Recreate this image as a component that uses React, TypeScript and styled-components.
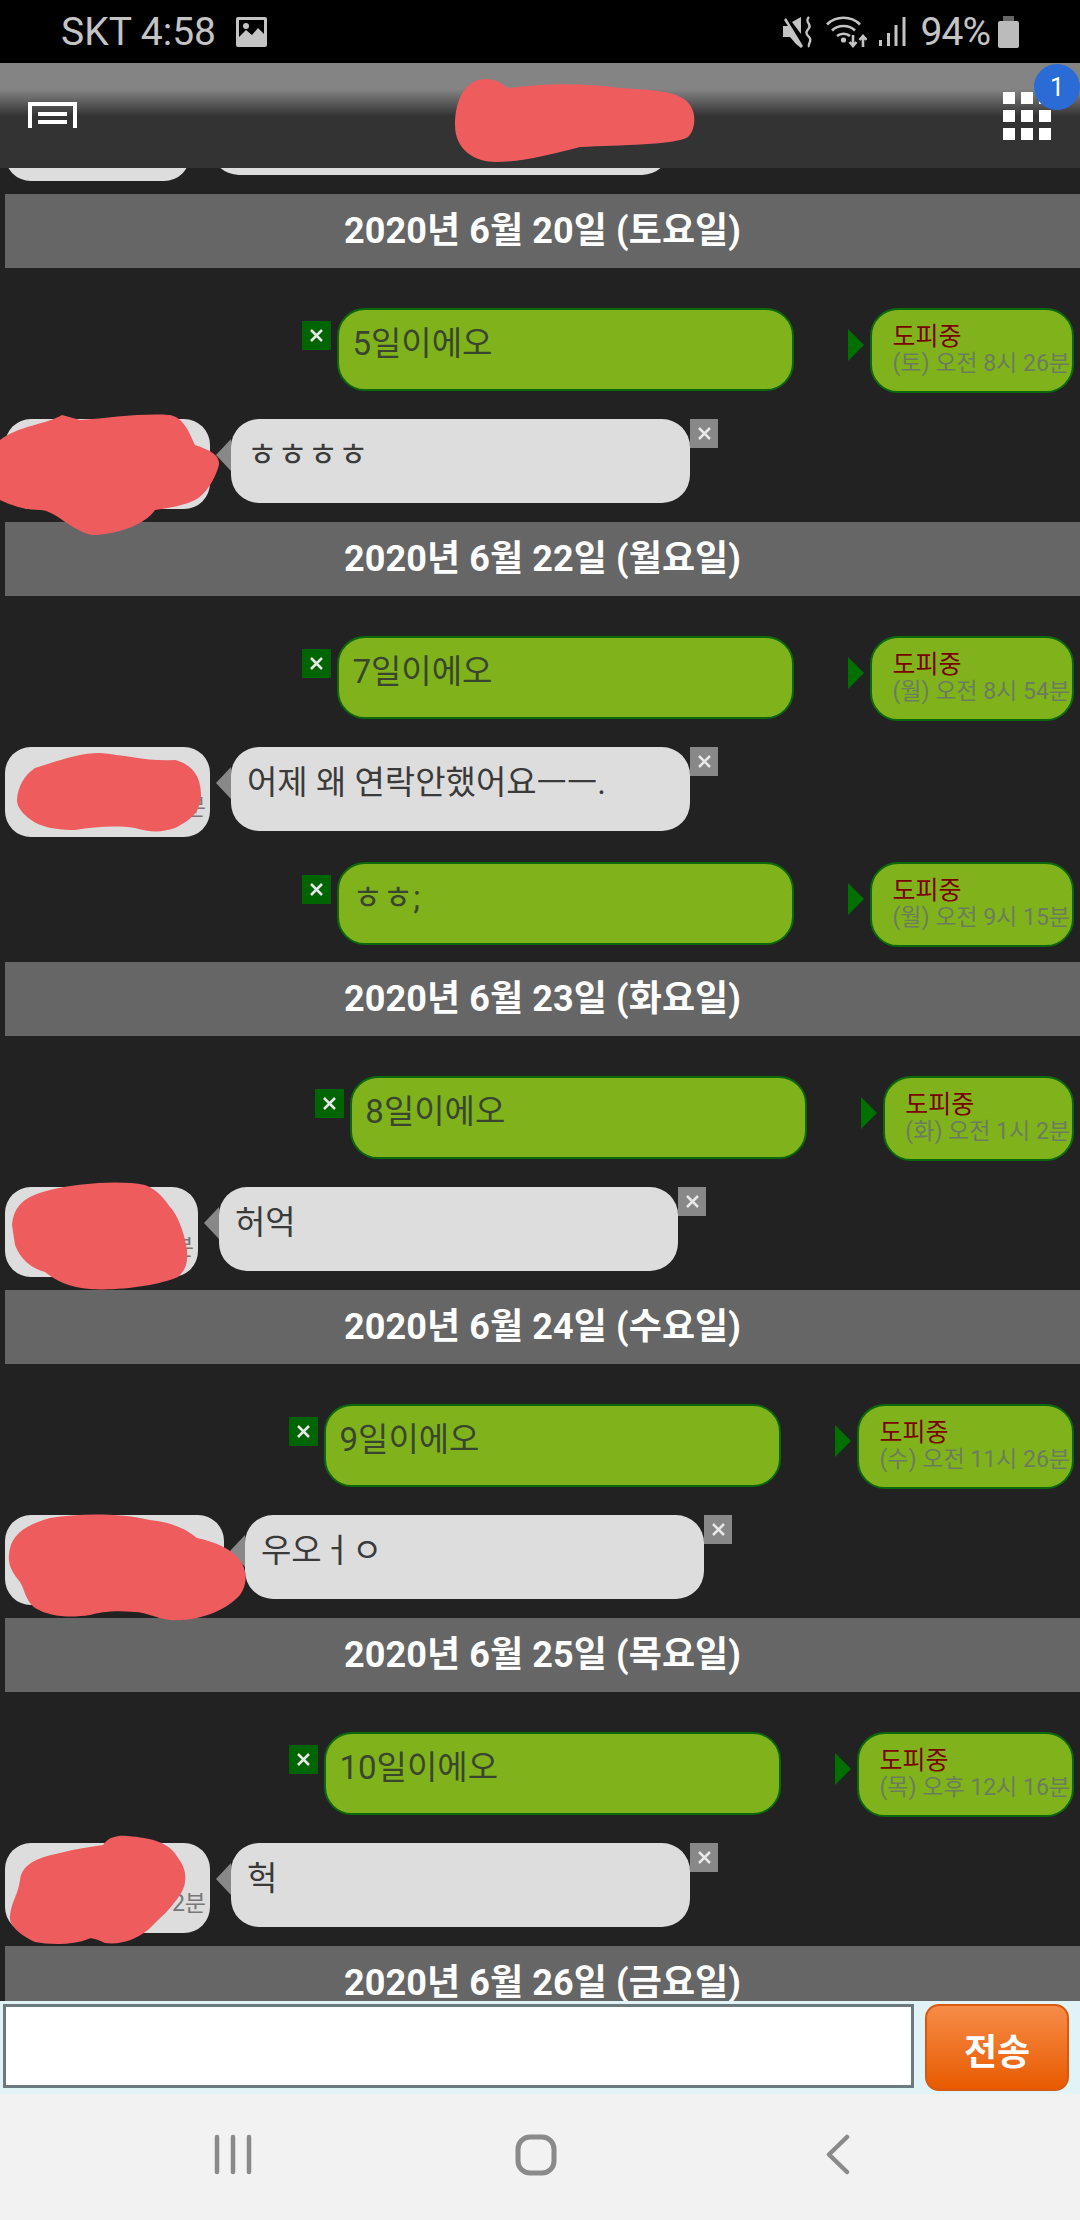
import React from "react";
import styled, { createGlobalStyle } from "styled-components";

const GlobalStyle = createGlobalStyle`
  html, body {
    margin: 0;
    padding: 0;
    background: #222;
    font-family: Roboto, "Noto Sans CJK KR", sans-serif;
  }
`;

const Page = styled.div`
  position: relative;
  width: 1080px;
  height: 2220px;
  display: flex;
  flex-direction: column;
  overflow: hidden;
`;

const StatusBar = styled.div`
  height: 63px;
  flex: none;
  background: #000;
  color: #c4c4c4;
  display: flex;
  align-items: center;
  padding: 0 61px 0 61px;
  box-sizing: border-box;
  font-size: 39px;
`;

const StatusLeft = styled.div`
  display: flex;
  align-items: center;
  gap: 20px;
  flex: 1;
`;

const StatusRight = styled.div`
  display: flex;
  align-items: center;
`;

const Percent = styled.span`
  letter-spacing: -1px;
`;

const Header = styled.div`
  height: 105px;
  flex: none;
  background: linear-gradient(to bottom, #848484 0, #848484 26px, #333 53px, #333 100%);
  display: flex;
  justify-content: space-between;
  align-items: flex-start;
  padding: 39px 29px 0 28px;
  box-sizing: border-box;
`;

const AppsButton = styled.div`
  position: relative;
  margin-top: -10px;
  display: grid;
  grid-template-columns: repeat(3, 12px);
  grid-auto-rows: 12px;
  gap: 6px;
`;

const AppsDot = styled.span`
  background: #fff;
`;

const Badge = styled.span`
  position: absolute;
  left: 31px;
  top: -28px;
  width: 46px;
  height: 46px;
  border-radius: 50%;
  background: #2b6bd6;
  color: #fff;
  font-size: 25px;
  display: flex;
  align-items: center;
  justify-content: center;
`;

const ChatList = styled.div`
  flex: 1;
  min-height: 0;
  overflow: hidden;
  background: #222;
`;

const Scroller = styled.div`
  display: flex;
  flex-direction: column;
  margin-top: -88px;
`;

const DateBar = styled.div`
  flex: none;
  height: 74px;
  margin: 0 0 28px 5px;
  background: #666;
  color: #fff;
  font-size: 36px;
  font-weight: 700;
  line-height: 74px;
  text-align: center;
  letter-spacing: 0.1px;
`;

const SentRow = styled.div`
  flex: none;
  display: flex;
  justify-content: flex-end;
  align-items: flex-start;
  margin: 12px 6px 15px 0;
`;

const ReceivedRow = styled.div`
  flex: none;
  display: flex;
  align-items: flex-start;
  margin: 11px 0 13px 5px;
`;

const CloseBox = styled.div<{ $sent?: boolean }>`
  flex: none;
  width: ${(p) => (p.$sent ? 29 : 28)}px;
  height: 29px;
  margin-top: ${(p) => (p.$sent ? 13 : 0)}px;
  margin-right: ${(p) => (p.$sent ? 6 : 0)}px;
  background: ${(p) => (p.$sent ? "#006400" : "#888")};
  color: #e8e8e8;
  display: flex;
  align-items: center;
  justify-content: center;
`;

const Bubble = styled.div<{ $sent?: boolean }>`
  flex: none;
  box-sizing: border-box;
  width: ${(p) => (p.$sent ? 457 : 459)}px;
  height: ${(p) => (p.$sent ? 83 : 84)}px;
  border-radius: 28px;
  padding: ${(p) => (p.$sent ? "15px 13px" : "17px 16px")};
  background: ${(p) => (p.$sent ? "#80b31b" : "#ddd")};
  border: ${(p) => (p.$sent ? "2.5px solid #0b680b" : "none")};
  color: ${(p) => (p.$sent ? "#3a4530" : "#3a3a3a")};
  font-size: 33px;
  line-height: 38px;
  white-space: nowrap;
`;

const SentArrow = styled.div`
  flex: none;
  width: 0;
  height: 0;
  margin: 21px 6px 0 54px;
  border-left: 16px solid #007000;
  border-top: 16px solid transparent;
  border-bottom: 16px solid transparent;
`;

const ReceivedArrow = styled.div`
  flex: none;
  width: 0;
  height: 0;
  margin: 20px 0 0 6px;
  border-right: 15px solid #888;
  border-top: 16px solid transparent;
  border-bottom: 16px solid transparent;
`;

const StatusBubble = styled.div`
  flex: none;
  box-sizing: border-box;
  height: 85px;
  border-radius: 28px;
  border: 2.5px solid #0b680b;
  background: #80b31b;
  padding: 14px 2px 0 20px;
  white-space: nowrap;
`;

const StatusLabel = styled.div`
  color: #7a0000;
  font-size: 25px;
  line-height: 26px;
`;

const StatusTime = styled.div`
  color: #6c7c5e;
  font-size: 23px;
  line-height: 27px;
`;

const Avatar = styled.div<{ $width: number }>`
  flex: none;
  box-sizing: border-box;
  width: ${(p) => p.$width}px;
  height: 90px;
  border-radius: 26px;
  background: #ddd;
  color: #777;
  font-size: 23px;
  line-height: 26px;
  padding: 0 4px 16px 0;
  display: flex;
  align-items: flex-end;
  justify-content: flex-end;
`;

const InputBar = styled.div`
  flex: none;
  height: 93px;
  box-sizing: border-box;
  background: #e2f3f7;
  display: flex;
  align-items: flex-start;
  padding: 3px 0 0 3px;
`;

const MessageInput = styled.input`
  flex: none;
  box-sizing: border-box;
  width: 911px;
  height: 84px;
  border: 3px solid #6c7a80;
  background: #fff;
  outline: none;
  padding: 0 8px;
`;

const SendButton = styled.button`
  flex: none;
  box-sizing: border-box;
  width: 144px;
  height: 87px;
  margin-left: 11px;
  border: 2px solid #d9590f;
  border-radius: 14px;
  background: linear-gradient(to bottom, #f68c48, #e85a00);
  color: #fff;
  font-family: inherit;
  font-size: 36px;
  font-weight: 700;
  padding: 2px 0 0;
`;

const NavBar = styled.div`
  flex: none;
  height: 126px;
  background: #f2f2f2;
  display: grid;
  grid-template-columns: repeat(3, 1fr);
  padding: 40px 0 0;
  box-sizing: border-box;
  color: #8a8a8a;
`;

const NavSlot = styled.div<{ $shift: number }>`
  display: flex;
  justify-content: center;
  transform: translateX(${(p) => p.$shift}px);
`;

const Scribbles = styled.svg`
  position: absolute;
  left: 0;
  top: 0;
  pointer-events: none;
`;

const ImageIcon = () => (
  <svg width="31" height="30" viewBox="0 0 31 30">
    <path
      fill="#c4c4c4"
      fillRule="evenodd"
      d="M2 0h27a2 2 0 0 1 2 2v26a2 2 0 0 1-2 2H2a2 2 0 0 1-2-2V2a2 2 0 0 1 2-2zM3 3v17l7-7 6 5 6-7 6 6V3zM10 6a3 3 0 1 0 0 6 3 3 0 0 0 0-6z"
    />
  </svg>
);

const MuteIcon = () => (
  <svg width="30" height="32" viewBox="0 0 30 32" style={{ marginRight: 13 }}>
    <path fill="#c4c4c4" d="M0 10h5L1 4l2-2 17 28-2 2-5-4-6-7H0zM9 6l9-5v17z" />
    <path d="M26 1c-5 5 3 7 0 11s-4 5 0 9-2 7 0 10" fill="none" stroke="#c4c4c4" strokeWidth="2.4" />
  </svg>
);

const WifiIcon = () => (
  <svg width="41" height="33" viewBox="0 0 41 33" style={{ marginRight: 12 }}>
    <g fill="none" stroke="#c4c4c4" strokeWidth="2.6">
      <path d="M1 9.500C10 .5 25 .5 34 9.500" />
      <path d="M6 15.500C12 9.500 23 9.500 29 15.500" />
      <path d="M11 21C14.500 18 20.500 18 24 21" />
      <path d="M27 20v11M23.500 27l3.500 4 3.500-4" />
      <path d="M37 32V21M33.500 25l3.500-4 3.500 4" />
    </g>
    <circle cx="17.500" cy="25" r="2.600" fill="#c4c4c4" />
  </svg>
);

const SignalIcon = () => (
  <svg width="27" height="29" viewBox="0 0 27 29" style={{ marginRight: 15 }}>
    <g fill="#c4c4c4">
      <rect x="0" y="23" width="3" height="6" />
      <rect x="8" y="16" width="3" height="13" />
      <rect x="15.500" y="8" width="3" height="21" />
      <rect x="23.500" y="0" width="3" height="29" />
    </g>
  </svg>
);

const BatteryIcon = () => (
  <svg width="21" height="32" viewBox="0 0 21 32" style={{ marginLeft: 8 }}>
    <rect x="5" y="0" width="11" height="5" fill="#666" />
    <rect x="0" y="5" width="21" height="27" rx="2" fill="#bbb" />
  </svg>
);

const MenuIcon = () => (
  <svg width="49" height="26" viewBox="0 0 49 26">
    <path d="M2 26V2h45v24" fill="none" stroke="#fff" strokeWidth="4" />
    <rect x="10" y="10" width="29" height="4" fill="#fff" />
    <rect x="10" y="18" width="29" height="4" fill="#fff" />
  </svg>
);

const RecentIcon = () => (
  <svg width="38" height="41" viewBox="0 0 38 41">
    <g fill="none" stroke="currentColor" strokeWidth="4.500" strokeLinecap="round">
      <path d="M3 3v35M19 3v35M35 3v35" />
    </g>
  </svg>
);

const HomeIcon = () => (
  <svg width="42" height="42" viewBox="0 0 42 42">
    <rect x="3" y="3" width="36" height="36" rx="12" fill="none" stroke="currentColor" strokeWidth="5" />
  </svg>
);

const BackIcon = () => (
  <svg width="24" height="41" viewBox="0 0 24 41">
    <path d="M21 3L3 20.500 21 38" fill="none" stroke="currentColor" strokeWidth="4.500" strokeLinecap="round" strokeLinejoin="round" />
  </svg>
);

const CrossIcon = () => (
  <svg width="15" height="15" viewBox="0 0 15 15">
    <path d="M2 2l11 11M13 2L2 13" stroke="currentColor" strokeWidth="2.500" fill="none" />
  </svg>
);

type Item =
  | { kind: "date"; text: string }
  | { kind: "sent"; text: string; time: string }
  | { kind: "received"; text: string; avatar: number; time?: string };

const items: Item[] = [
  { kind: "received", text: "", avatar: 185 },
  { kind: "date", text: "2020년 6월 20일 (토요일)" },
  { kind: "sent", text: "5일이에오", time: "(토) 오전 8시 26분" },
  { kind: "received", text: "ㅎㅎㅎㅎ", avatar: 205, time: "분" },
  { kind: "date", text: "2020년 6월 22일 (월요일)" },
  { kind: "sent", text: "7일이에오", time: "(월) 오전 8시 54분" },
  { kind: "received", text: "어제 왜 연락안했어요ㅡㅡ.", avatar: 205, time: "분" },
  { kind: "sent", text: "ㅎㅎ;", time: "(월) 오전 9시 15분" },
  { kind: "date", text: "2020년 6월 23일 (화요일)" },
  { kind: "sent", text: "8일이에오", time: "(화) 오전 1시 2분" },
  { kind: "received", text: "허억", avatar: 193, time: "분" },
  { kind: "date", text: "2020년 6월 24일 (수요일)" },
  { kind: "sent", text: "9일이에오", time: "(수) 오전 11시 26분" },
  { kind: "received", text: "우오ㅓㅇ", avatar: 219 },
  { kind: "date", text: "2020년 6월 25일 (목요일)" },
  { kind: "sent", text: "10일이에오", time: "(목) 오후 12시 16분" },
  { kind: "received", text: "헉", avatar: 205, time: "2분" },
  { kind: "date", text: "2020년 6월 26일 (금요일)" },
];

const scribbles = [
  "M455 125C455 100 465 79 486 79C500 79 505 88 510 88C540 84 580 82 620 88C650 90 680 90 690 105C697 115 695 130 688 137C675 145 620 145 580 147C550 155 520 162 496 162C475 162 455 150 455 125Z",
  "M0 440C20 425 45 425 62 415L80 420C110 418 140 413 170 415C185 418 190 435 195 445C210 450 220 455 219 465C215 480 205 495 195 500C185 505 170 508 155 510C145 525 115 535 92 535C70 530 55 510 40 510C25 510 10 505 0 500Z",
  "M17 800C18 785 25 775 35 768C60 760 80 753 100 753C125 755 150 762 175 760C195 765 201 780 201 795C200 810 195 818 175 828C160 833 150 832 135 828C115 825 95 827 75 830C50 830 35 825 25 815C20 810 17 805 17 800Z",
  "M12 1225C14 1205 25 1196 50 1190C80 1183 120 1180 145 1185C158 1190 165 1200 170 1207C178 1215 185 1235 187 1250C188 1265 185 1270 178 1277C160 1285 120 1291 90 1289C70 1288 55 1280 45 1272C30 1268 20 1258 15 1245Z",
  "M9 1555C10 1535 25 1525 50 1518C80 1513 120 1513 150 1520C170 1522 185 1528 197 1538C215 1542 230 1548 240 1560C248 1572 247 1585 240 1595C225 1612 195 1622 170 1620C155 1618 145 1612 135 1612C115 1610 100 1612 90 1615C70 1618 50 1617 35 1608C25 1600 25 1590 20 1582C12 1572 8 1565 9 1555Z",
  "M10 1915C12 1900 18 1895 20 1880C22 1865 35 1858 60 1853C75 1849 90 1847 103 1845C108 1837 118 1835 128 1836C150 1838 170 1842 178 1858C188 1870 187 1885 180 1895C170 1910 160 1918 148 1930C135 1940 120 1945 105 1943C98 1940 92 1937 88 1939C75 1945 50 1945 35 1942C20 1935 8 1925 10 1915Z",
];

const App: React.FC = () => (
  <Page>
    <GlobalStyle />
    <StatusBar>
      <StatusLeft>
        <span>SKT 4:58</span>
        <ImageIcon />
      </StatusLeft>
      <StatusRight>
        <MuteIcon />
        <WifiIcon />
        <SignalIcon />
        <Percent>94%</Percent>
        <BatteryIcon />
      </StatusRight>
    </StatusBar>
    <Header>
      <MenuIcon />
      <AppsButton>
        {Array.from({ length: 9 }, (_, i) => (
          <AppsDot key={i} />
        ))}
        <Badge>1</Badge>
      </AppsButton>
    </Header>
    <ChatList>
      <Scroller>
        {items.map((item, i) => {
          if (item.kind === "date") return <DateBar key={i}>{item.text}</DateBar>;
          if (item.kind === "sent")
            return (
              <SentRow key={i}>
                <CloseBox $sent>
                  <CrossIcon />
                </CloseBox>
                <Bubble $sent>{item.text}</Bubble>
                <SentArrow />
                <StatusBubble>
                  <StatusLabel>도피중</StatusLabel>
                  <StatusTime>{item.time}</StatusTime>
                </StatusBubble>
              </SentRow>
            );
          return (
            <ReceivedRow key={i}>
              <Avatar $width={item.avatar}>{item.time}</Avatar>
              <ReceivedArrow />
              <Bubble>{item.text}</Bubble>
              <CloseBox>
                <CrossIcon />
              </CloseBox>
            </ReceivedRow>
          );
        })}
      </Scroller>
    </ChatList>
    <InputBar>
      <MessageInput readOnly />
      <SendButton>전송</SendButton>
    </InputBar>
    <NavBar>
      <NavSlot $shift={53}>
        <RecentIcon />
      </NavSlot>
      <NavSlot $shift={-4}>
        <HomeIcon />
      </NavSlot>
      <NavSlot $shift={-62}>
        <BackIcon />
      </NavSlot>
    </NavBar>
    <Scribbles width="1080" height="2220" viewBox="0 0 1080 2220">
      {scribbles.map((d, i) => (
        <path key={i} d={d} fill="#ee5c5e" />
      ))}
    </Scribbles>
  </Page>
);

export default App;
